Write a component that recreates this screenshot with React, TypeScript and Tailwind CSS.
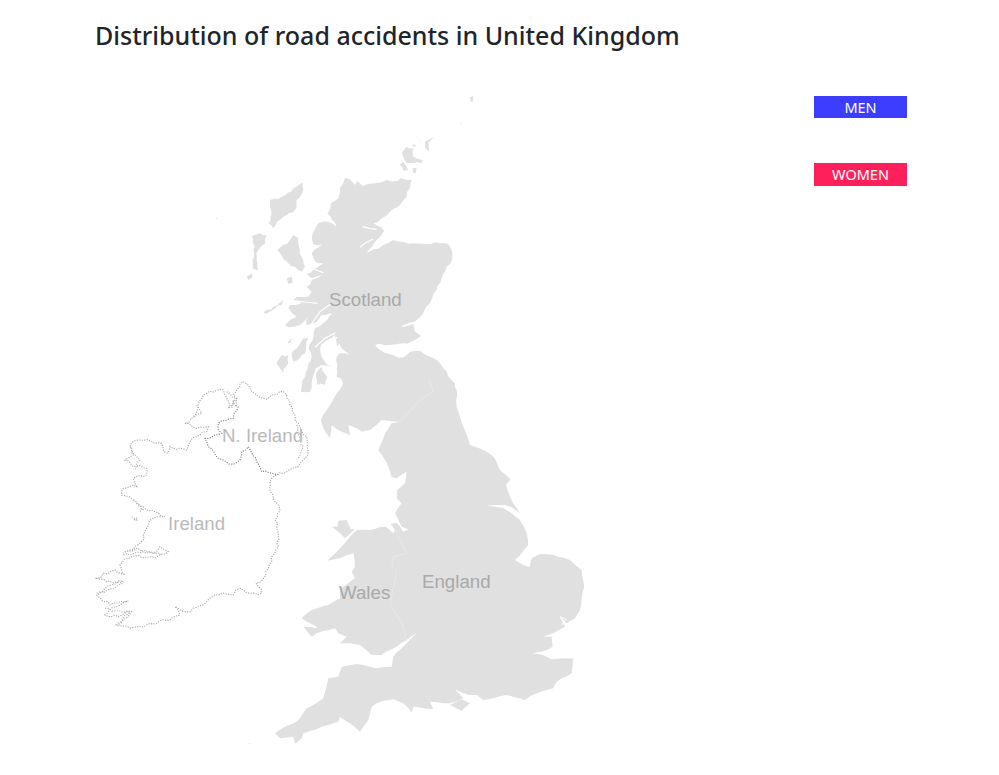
import React from 'react';

// Outlines are traced at 3x and scaled down by their group.
// crinkle breaks the long straight runs up so the coast doesn't look like a polygon.
const crinkle = (d: string, step: number, amp: number) => {
  const nums = (d.match(/-?\d+(\.\d+)?/g) || []).map(Number);
  const pts: number[][] = [];
  for (let i = 0; i < nums.length; i += 2) pts.push([nums[i], nums[i + 1]]);
  let out = '';
  let n = 0;
  pts.forEach((p, i) => {
    const q = pts[i + 1];
    out += `${i === 0 ? 'M' : 'L'}${p[0]} ${p[1]}`;
    if (!q) return;
    const len = Math.hypot(q[0] - p[0], q[1] - p[1]);
    const parts = Math.floor(len / step);
    for (let k = 1; k < parts; k++) {
      n++;
      const t = k / parts;
      const off = amp * (Math.sin(n * 12.9898) * 0.7 + Math.sin(n * 4.1414) * 0.5);
      const x = p[0] + (q[0] - p[0]) * t - ((q[1] - p[1]) / len) * off;
      const y = p[1] + (q[1] - p[1]) * t + ((q[0] - p[0]) / len) * off;
      out += `L${x.toFixed(1)} ${y.toFixed(1)}`;
    }
  });
  return out;
};

const scotland =
  'M315 263L330 268L345 285L352 272L368 288L385 282L420 278L440 270L475 272L482 264L515 270L510 295L500 320L480 345L450 365L425 385L400 400L432 422L410 450L380 490L400 478L430 465L460 450L490 455L520 460L560 462L600 460L625 462L635 480L637 505L620 530L605 565L590 600L570 640L550 670L525 695L490 705L468 718L500 708L520 702L525 725L543 738L525 750L490 760L450 765L405 765L420 780L450 792L490 802L510 785L540 782L570 800L600 820L625 860L650 900L650 950L300 950L300 900L310 880L290 860L290 800L300 790L330 795L305 775L300 745L292 770L285 735L255 755L240 775L245 800L272 830L245 825L228 835L215 880L210 905L182 905L195 860L215 800L205 775L225 715L262 690L272 670L245 675L230 695L200 705L205 680L180 705L145 712L135 705L150 690L170 680L145 655L150 645L185 640L160 630L170 620L205 620L215 605L200 590L215 570L245 555L215 565L200 552L235 530L250 520L225 515L215 490L240 470L220 462L218 430L235 400L265 395L290 410L262 370L272 340L295 325L300 295L315 263';
const scotlandSlits = [
  'M368 410L390 416L410 418',
  'M360 472L378 458L398 448',
  'M160 632L195 636L232 640',
  'M212 705L240 665L275 640',
  'M240 682L275 672',
  'M225 772L255 745L287 728',
  'M252 795L270 760L292 742',
  'M215 535L250 548',
  'M218 470L245 465',
  'M200 525L225 520',
];
const islands = [
  'M112 480L130 465L150 450L160 435L175 445L180 480L195 530L185 545L165 530L145 520L125 495L112 480',
  'M90 330L125 320L160 295L188 278L190 300L170 330L165 360L130 380L100 415L85 400L95 370L90 350L90 330',
  'M35 438L60 430L80 435L75 460L55 480L50 510L55 540L40 538L42 500L45 470L35 438',
  'M20 560L35 550L38 562L25 570L20 560',
  'M72 665L100 650L130 630L125 645L95 662L75 672L72 665',
  'M110 820L125 795L145 795L145 820L130 850L110 820',
  'M155 790L190 745L205 745L195 790L160 815L155 790',
  'M140 565L155 560L158 578L145 582L140 565',
  'M228 850L245 830L262 860L255 885L232 885L228 850',
  'M142 760L155 745L152 758L142 760',
  'M485 190L500 170L520 175L520 200L548 210L545 220L520 220L500 220L490 200L485 190',
  'M478 225L490 215L505 240L490 242L478 225',
  'M518 235L530 233L527 250L520 250L518 235',
  'M515 168L525 162L527 172L515 168',
];
const england =
  'M500 0L545 0L585 40L590 110L610 170L630 225L680 245L705 265L720 300L752 328L738 345L750 380L780 430L755 412L735 405L682 408L730 414L755 430L780 450L800 490L805 525L765 570L790 585L808 592L815 565L840 552L880 555L930 570L965 600L973 650L960 720L945 745L920 760L900 740L915 770L880 790L850 800L875 800L878 830L845 845L815 850L850 855L875 868L940 865L935 910L890 935L880 955L830 970L795 990L740 975L670 990L650 975L625 975L600 965L585 958L610 985L570 1000L510 995L520 1018L460 1010L455 1028L430 1000L400 988L350 1000L335 1010L325 1050L300 1085L270 1060L240 1040L235 1055L185 1070L130 1090L125 1105L105 1122L100 1100L60 1105L45 1090L75 1070L110 1055L140 1015L190 985L205 925L235 920L245 890L290 882L350 895L395 890L400 860L435 825L472 788L440 810L410 830L365 855L335 855L300 825L270 820L240 820L260 800L235 790L225 775L170 790L155 800L130 770L170 775L170 770L125 745L155 720L205 705L240 685L240 655L285 625L275 605L285 590L280 550L240 565L202 572L230 545L262 510L290 480L330 480L378 470L400 490L405 480L392 462L410 458L430 485L445 478L425 470L405 430L425 400L410 385L412 360L435 340L440 305L410 325L395 322L385 290L355 240L375 190L395 160L420 155L365 150L330 180L305 185L290 175L265 165L270 195L245 185L215 165L210 205L190 175L182 150L200 120L230 70L250 45L240 0L500 0';
const ireland =
  'M460 20L480 35L500 60L520 70L580 50L600 90L625 145L650 185L655 230L630 265L590 290L560 300L540 320L550 370L568 395L555 435L565 480L565 515L545 560L520 610L498 625L515 655L480 655L450 640L430 660L375 660L350 680L310 700L285 710L255 695L270 720L240 735L200 745L140 755L80 750L100 735L125 710L85 725L45 720L80 695L115 678L60 690L40 680L20 660L45 640L100 620L50 620L20 610L40 595L75 585L105 600L90 570L125 545L185 545L235 530L210 515L190 535L140 520L100 535L155 500L170 460L190 430L225 425L195 410L155 405L130 375L95 360L100 340L140 335L130 310L170 300L170 280L130 275L105 255L130 240L120 210L150 195L215 205L232 235L240 215L290 225L300 200L350 170L355 155L320 160L285 145L310 125L325 90L340 60L400 45L420 90L415 100L430 75L440 95L430 60L460 20';
const niBorder =
  'M445 95L430 130L385 145L385 165L395 175L345 190L355 215L385 250L430 268L450 255L455 230L475 215L500 260L515 290L545 295L570 300';
// the smaller bays and inlets that double the Irish coastline
const irishInlets = [
  'M410 50L440 70L425 100',
  'M320 90L335 115L310 130',
  'M120 215L150 255L135 285',
  'M130 375L160 395L150 410',
  'M100 540L160 525L215 540',
  'M45 700L120 710L80 745',
  'M20 655L100 625',
  'M620 150L640 215L625 250',
  'M125 425L140 435M130 435L142 428',
];

const UkMap = () => (
  <svg width="510" height="660" viewBox="90 90 510 660" className="block shrink-0">
    <g transform="translate(240 90) scale(0.3333)" fill="#e0e0e0">
      <path d={crinkle(scotland, 12, 4)} />
      {islands.map((d, i) => (
        <path key={i} d={crinkle(d, 10, 4)} />
      ))}
      <path d="M690 22L700 18L698 35L692 35Z" />
      <path d="M660 100L665 97L662 104Z" />
      <path d="M520 135L535 145L548 165L540 150Z" />
      <path d="M555 155L582 142L565 158L568 185L556 175Z" />
      {scotlandSlits.map((d, i) => (
        <path key={i} d={d} fill="none" stroke="#ffffff" strokeWidth="3.5" />
      ))}
    </g>
    <g transform="translate(260 370) scale(0.3333)">
      <path d={crinkle(england, 16, 1.8)} fill="#e0e0e0" />
      <path d="M215 470L232 470L235 452L260 450L272 478L285 478L255 505L240 490Z" fill="#e0e0e0" />
      <path d="M570 1005L605 988L630 1000L605 1022Z" fill="#e0e0e0" />
      <path d="M508 30L520 65L480 90L420 155" fill="none" stroke="#ececec" strokeWidth="2" />
      <path d="M405 480L440 550L400 560L395 590L410 600L405 630L390 700L430 770L440 815" fill="none" stroke="#ececec" strokeWidth="2" />
      <path d="M900 740L918 748L905 765" fill="none" stroke="#ffffff" strokeWidth="3" />
    </g>
    <g transform="translate(90 375) scale(0.3333)" fill="none" strokeDasharray="3.5 4" strokeWidth="3.4">
      <path d={crinkle(ireland, 10, 5.5)} stroke="#a8a8a8" />
      <path d={crinkle(niBorder, 10, 3.5)} stroke="#808080" />
      {irishInlets.map((d, i) => (
        <path key={i} d={crinkle(d, 10, 5)} stroke="#b4b4b4" />
      ))}
    </g>
    <g fontFamily="'Liberation Sans', Arial, sans-serif" fontSize="18.7">
      <text x="329" y="306" fill="#a9a9a9">Scotland</text>
      <text x="422" y="588" fill="#a9a9a9">England</text>
      <text x="339" y="599" fill="#a9a9a9">Wales</text>
      <text x="222" y="442" fill="#bababa">N. Ireland</text>
      <text x="168" y="530" fill="#bababa">Ireland</text>
    </g>
    <rect x="216" y="218" width="1" height="1" fill="#e0e0e0" />
    <rect x="249" y="743" width="1" height="1" fill="#e0e0e0" />
  </svg>
);

export default function App() {
  return (
    <div className="w-[999px] h-[775px] bg-white overflow-hidden font-['Noto_Sans',sans-serif]">
      <h1 className="pl-[95px] pt-[18px] h-[90px] text-[25px] leading-[34px] font-medium text-[#212529]">
        Distribution of road accidents in United Kingdom
      </h1>
      <div className="flex pl-[90px]">
        <UkMap />
        <div className="ml-[214px] pt-[6px] flex flex-col w-[93px]">
          <button className="h-[22px] bg-[#3d3dff] text-white text-[14.5px] leading-[22px]">MEN</button>
          <button className="mt-[45px] h-[23px] bg-[#ff1f5a] text-white text-[14.5px] leading-[23px]">WOMEN</button>
        </div>
      </div>
    </div>
  );
}
